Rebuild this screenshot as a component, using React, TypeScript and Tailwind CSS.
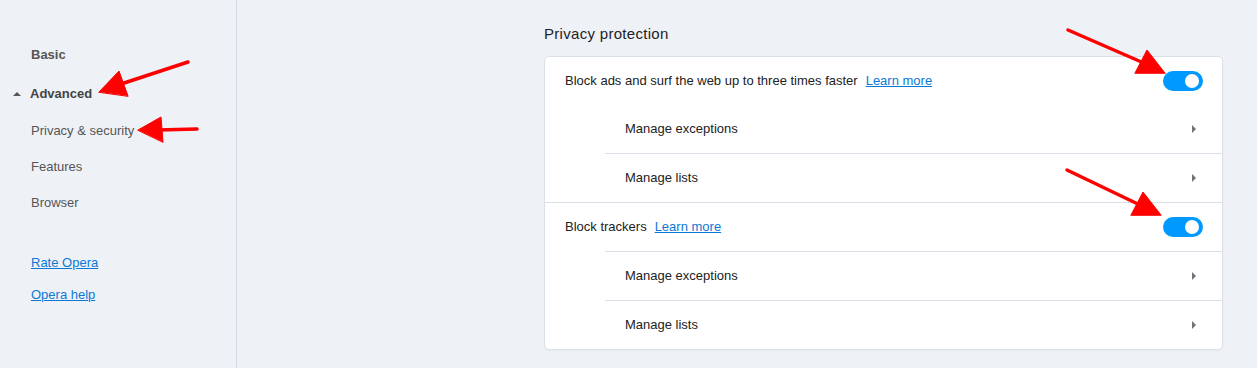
import React from 'react';

const font = { fontFamily: '"Liberation Sans", Arial, sans-serif' };

function Toggle() {
  return (
    <div className="w-[40px] h-[20px] rounded-full bg-[#0099ff] flex items-center justify-end pr-[4px] shrink-0">
      <div className="w-[14px] h-[14px] rounded-full bg-white" />
    </div>
  );
}

function Chevron() {
  return (
    <svg width="8" height="10" viewBox="0 0 8 10" className="shrink-0">
      <path d="M2 1 L6 5 L2 9 Z" fill="#6f747a" />
    </svg>
  );
}

function MainRow({ label }: { label: string }) {
  return (
    <div className="h-[48px] flex items-center justify-between pl-[20px] pr-[19px]">
      <div className="flex items-center gap-[8px] text-[13px] text-[#222]">
        <span>{label}</span>
        <a href="#" className="text-[#0b78d6] underline">Learn more</a>
      </div>
      <Toggle />
    </div>
  );
}

function SubRow({ label, divider }: { label: string; divider?: boolean }) {
  return (
    <div className={divider ? 'ml-[60px] border-t border-[#d9e0e8]' : 'ml-[60px]'}>
      <div className="h-[48px] flex items-center justify-between pl-[20px] pr-[24px] text-[13px] text-[#222]">
        <span>{label}</span>
        <Chevron />
      </div>
    </div>
  );
}

function Arrows() {
  return (
    <svg className="absolute inset-0 pointer-events-none" width="1257" height="368" viewBox="0 0 1257 368">
      <g fill="#ff0000" stroke="#ff0000" strokeLinecap="round">
        <line x1="188" y1="62" x2="118" y2="85" strokeWidth="3.5" />
        <polygon points="99,92 119,71 128,96" />
        <line x1="197" y1="129" x2="158" y2="130" strokeWidth="3.5" />
        <polygon points="138,130 161,117 163,142" />
        <line x1="1068" y1="30" x2="1146" y2="64" strokeWidth="3.5" />
        <polygon points="1165,73 1147,50 1135,73" />
        <line x1="1067" y1="170" x2="1142" y2="206" strokeWidth="3.5" />
        <polygon points="1161,215 1143,192 1131,215" />
      </g>
    </svg>
  );
}

export default function App() {
  return (
    <div className="relative w-[1257px] h-[368px] bg-[#eef2f7] flex overflow-hidden" style={font}>
      <aside className="w-[237px] h-full border-r border-[#d6dde6] shrink-0 flex flex-col pt-[37px]">
        <div className="h-[36px] flex items-center pl-[31px] text-[13px] font-bold text-[#555]">Basic</div>
        <div className="h-[36px] mt-[3px] flex items-center pl-[13px] text-[13px] font-bold text-[#444]">
          <svg width="8" height="6" viewBox="0 0 8 6" className="mr-[9px]">
            <path d="M0 5 L4 1 L8 5 Z" fill="#555" />
          </svg>
          Advanced
        </div>
        <div className="h-[36px] mt-[1px] flex items-center pl-[31px] text-[13px] text-[#555]">Privacy &amp; security</div>
        <div className="h-[36px] flex items-center pl-[31px] text-[13px] text-[#555]">Features</div>
        <div className="h-[36px] flex items-center pl-[31px] text-[13px] text-[#555]">Browser</div>
        <div className="h-[28px] mt-[28px] flex items-center pl-[31px] text-[13px]">
          <a href="#" className="text-[#0b78d6] underline">Rate Opera</a>
        </div>
        <div className="h-[28px] mt-[4px] flex items-center pl-[31px] text-[13px]">
          <a href="#" className="text-[#0b78d6] underline">Opera help</a>
        </div>
      </aside>

      <main className="flex-1">
        <div className="ml-[307px] w-[679px] pt-[25px]">
          <h2 className="text-[15px] leading-[18px] tracking-[0.3px] text-[#222] mb-[13px]">Privacy protection</h2>
          <div className="bg-white border border-[#d9e0e8] rounded-[5px] shadow-[0_1px_2px_rgba(0,0,0,0.04)]">
            <MainRow label="Block ads and surf the web up to three times faster" />
            <SubRow label="Manage exceptions" />
            <SubRow label="Manage lists" divider />
            <div className="border-t border-[#d9e0e8]">
              <MainRow label="Block trackers" />
            </div>
            <SubRow label="Manage exceptions" divider />
            <SubRow label="Manage lists" divider />
          </div>
        </div>
      </main>

      <Arrows />
    </div>
  );
}
